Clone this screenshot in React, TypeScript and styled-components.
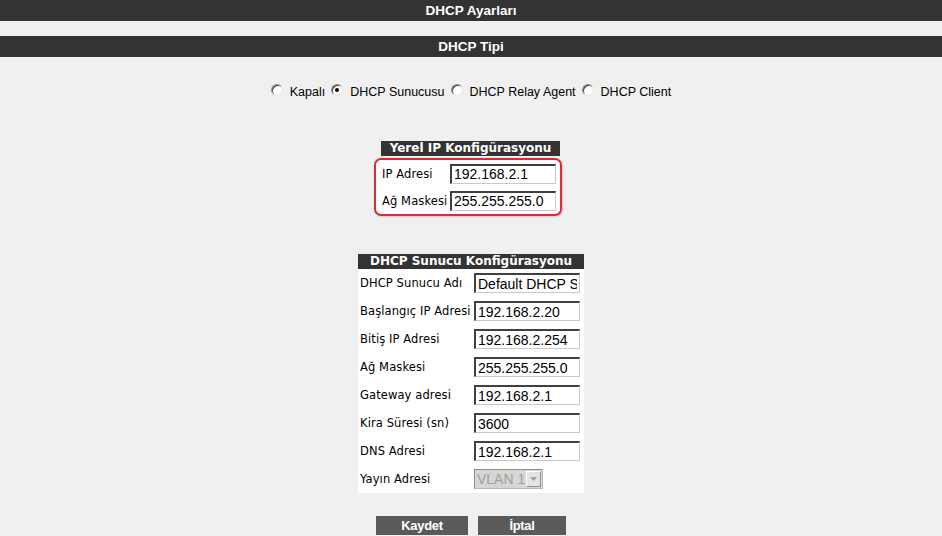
import React from 'react';
import styled, { createGlobalStyle } from 'styled-components';

const GlobalStyle = createGlobalStyle`
  html, body {
    margin: 0;
    padding: 0;
    background: #f0f0f0;
  }
  body {
    font-family: "Liberation Sans", Arial, sans-serif;
  }
`;

const Page = styled.div`
  width: 942px;
  height: 536px;
  overflow: hidden;
  background: #f0f0f0;
`;

const TitleBar = styled.div<{ $top?: number }>`
  height: 21px;
  margin-top: ${(p) => p.$top || 0}px;
  background: #333333;
  color: #ffffff;
  font-family: "Liberation Sans", Arial, sans-serif;
  font-weight: bold;
  font-size: 13.5px;
  display: flex;
  align-items: center;
  justify-content: center;
`;

const RadioRow = styled.div`
  margin-top: 26px;
  height: 18px;
  display: flex;
  align-items: center;
  justify-content: center;
  font-family: "Liberation Sans", Arial, sans-serif;
  font-size: 12.5px;
  color: #000;
`;

const RadioOption = styled.label`
  display: flex;
  align-items: center;
  margin: 0 3px;
`;

const RadioDot = styled.span<{ $checked?: boolean }>`
  position: relative;
  width: 10px;
  height: 10px;
  margin-right: 7px;
  margin-top: -5px;
  border-radius: 50%;
  background: #fff;
  border: 1px solid #8a8a8a;
  border-bottom-color: #e4e4e4;
  border-right-color: #e4e4e4;
  box-shadow: inset 1px 1px 0 #404040;

  &::after {
    content: '';
    display: ${(p) => (p.$checked ? 'block' : 'none')};
    position: absolute;
    left: 3px;
    top: 3px;
    width: 4px;
    height: 4px;
    border-radius: 50%;
    background: #000;
  }
`;

const YerelWrap = styled.div`
  width: 188px;
  margin: 40px 0 0 calc(50% - 97px);
`;

const SectionHead = styled.div<{ $width?: number; $indent?: number }>`
  width: ${(p) => (p.$width ? `${p.$width}px` : 'auto')};
  margin-left: ${(p) => p.$indent || 0}px;
  height: 15px;
  background: #333333;
  color: #ffffff;
  font-family: "DejaVu Sans", Verdana, sans-serif;
  font-weight: bold;
  font-size: 12px;
  line-height: 15px;
  text-align: center;
  white-space: nowrap;
`;

const RedBox = styled.div`
  margin-top: 2px;
  border: 2px solid #dd2a35;
  border-radius: 7px;
  background: #ffffff;
  box-shadow: 1px 1px 2px rgba(0, 0, 0, 0.15);
`;

const YerelRow = styled.div`
  display: grid;
  grid-template-columns: 74px 106px;
  align-items: center;
  height: 27px;
`;

const Label = styled.span<{ $pad?: number }>`
  padding-left: ${(p) => p.$pad || 0}px;
  font-family: "DejaVu Sans", Verdana, sans-serif;
  font-size: 11.5px;
  letter-spacing: 0.1px;
  color: #000;
  white-space: nowrap;
`;

const TextInput = styled.input`
  box-sizing: border-box;
  width: 106px;
  height: 20px;
  padding: 0 2px;
  margin: 0;
  background: #ffffff;
  border: 1px solid #c8c8c8;
  border-top: 2px solid #404040;
  border-left: 2px solid #404040;
  font-family: "Liberation Sans", Arial, sans-serif;
  font-size: 14px;
  color: #000;
  outline: none;
`;

const ServerTable = styled.div`
  width: 226px;
  margin: 38px auto 0;
  background: #ffffff;
`;

const ServerRow = styled.div`
  display: grid;
  grid-template-columns: 116px 106px;
  align-items: center;
  height: 28px;
`;

const SelectBox = styled.div`
  box-sizing: border-box;
  width: 69px;
  height: 20px;
  display: flex;
  align-items: center;
  justify-content: space-between;
  overflow: hidden;
  white-space: nowrap;
  background: #d6d6d2;
  border: 1px solid #b8b8b8;
  border-top-color: #8c8c8c;
  border-left-color: #8c8c8c;
  font-family: "Liberation Sans", Arial, sans-serif;
  font-size: 14px;
  color: #a0a0a0;
  padding-left: 2px;
`;

const SelectArrow = styled.span`
  box-sizing: border-box;
  flex: none;
  width: 15px;
  height: 16px;
  margin-right: 1px;
  background: #e4e4e0;
  border: 1px solid #ffffff;
  border-right-color: #909090;
  border-bottom-color: #909090;
  display: flex;
  align-items: center;
  justify-content: center;
`;

const ButtonRow = styled.div`
  margin-top: 23px;
  display: flex;
  justify-content: center;
  gap: 10px;
`;

const ActionButton = styled.button<{ $width: number }>`
  width: ${(p) => p.$width}px;
  height: 19px;
  padding: 0;
  border: none;
  background: #5a5a5a;
  color: #ffffff;
  font-family: "Liberation Sans", Arial, sans-serif;
  font-weight: bold;
  font-size: 13px;
  letter-spacing: -0.3px;
  cursor: pointer;
`;

const radios = [
  { label: 'Kapalı', checked: false },
  { label: 'DHCP Sunucusu', checked: true },
  { label: 'DHCP Relay Agent', checked: false },
  { label: 'DHCP Client', checked: false },
];

const serverRows = [
  { label: 'DHCP Sunucu Adı', value: 'Default DHCP Server' },
  { label: 'Başlangıç IP Adresi', value: '192.168.2.20' },
  { label: 'Bitiş IP Adresi', value: '192.168.2.254' },
  { label: 'Ağ Maskesi', value: '255.255.255.0' },
  { label: 'Gateway adresi', value: '192.168.2.1' },
  { label: 'Kira Süresi (sn)', value: '3600' },
  { label: 'DNS Adresi', value: '192.168.2.1' },
];

export default function App() {
  return (
    <Page>
      <GlobalStyle />
      <TitleBar>DHCP Ayarları</TitleBar>
      <TitleBar $top={15}>DHCP Tipi</TitleBar>

      <RadioRow>
        {radios.map((r) => (
          <RadioOption key={r.label}>
            <RadioDot $checked={r.checked} />
            {r.label}
          </RadioOption>
        ))}
      </RadioRow>

      <YerelWrap>
        <SectionHead $width={179} $indent={7}>
          Yerel IP Konfigürasyonu
        </SectionHead>
        <RedBox>
          <YerelRow>
            <Label $pad={6}>IP Adresi</Label>
            <TextInput defaultValue="192.168.2.1" />
          </YerelRow>
          <YerelRow>
            <Label $pad={6}>Ağ Maskesi</Label>
            <TextInput defaultValue="255.255.255.0" />
          </YerelRow>
        </RedBox>
      </YerelWrap>

      <ServerTable>
        <SectionHead>DHCP Sunucu Konfigürasyonu</SectionHead>
        {serverRows.map((row) => (
          <ServerRow key={row.label}>
            <Label $pad={2}>{row.label}</Label>
            <TextInput defaultValue={row.value} />
          </ServerRow>
        ))}
        <ServerRow>
          <Label $pad={2}>Yayın Adresi</Label>
          <SelectBox>
            VLAN 1
            <SelectArrow>
              <svg width="7" height="4" viewBox="0 0 7 4">
                <path d="M0 0 L7 0 L3.5 4 Z" fill="#a0a0a0" />
              </svg>
            </SelectArrow>
          </SelectBox>
        </ServerRow>
      </ServerTable>

      <ButtonRow>
        <ActionButton $width={92}>Kaydet</ActionButton>
        <ActionButton $width={88}>İptal</ActionButton>
      </ButtonRow>
    </Page>
  );
}
